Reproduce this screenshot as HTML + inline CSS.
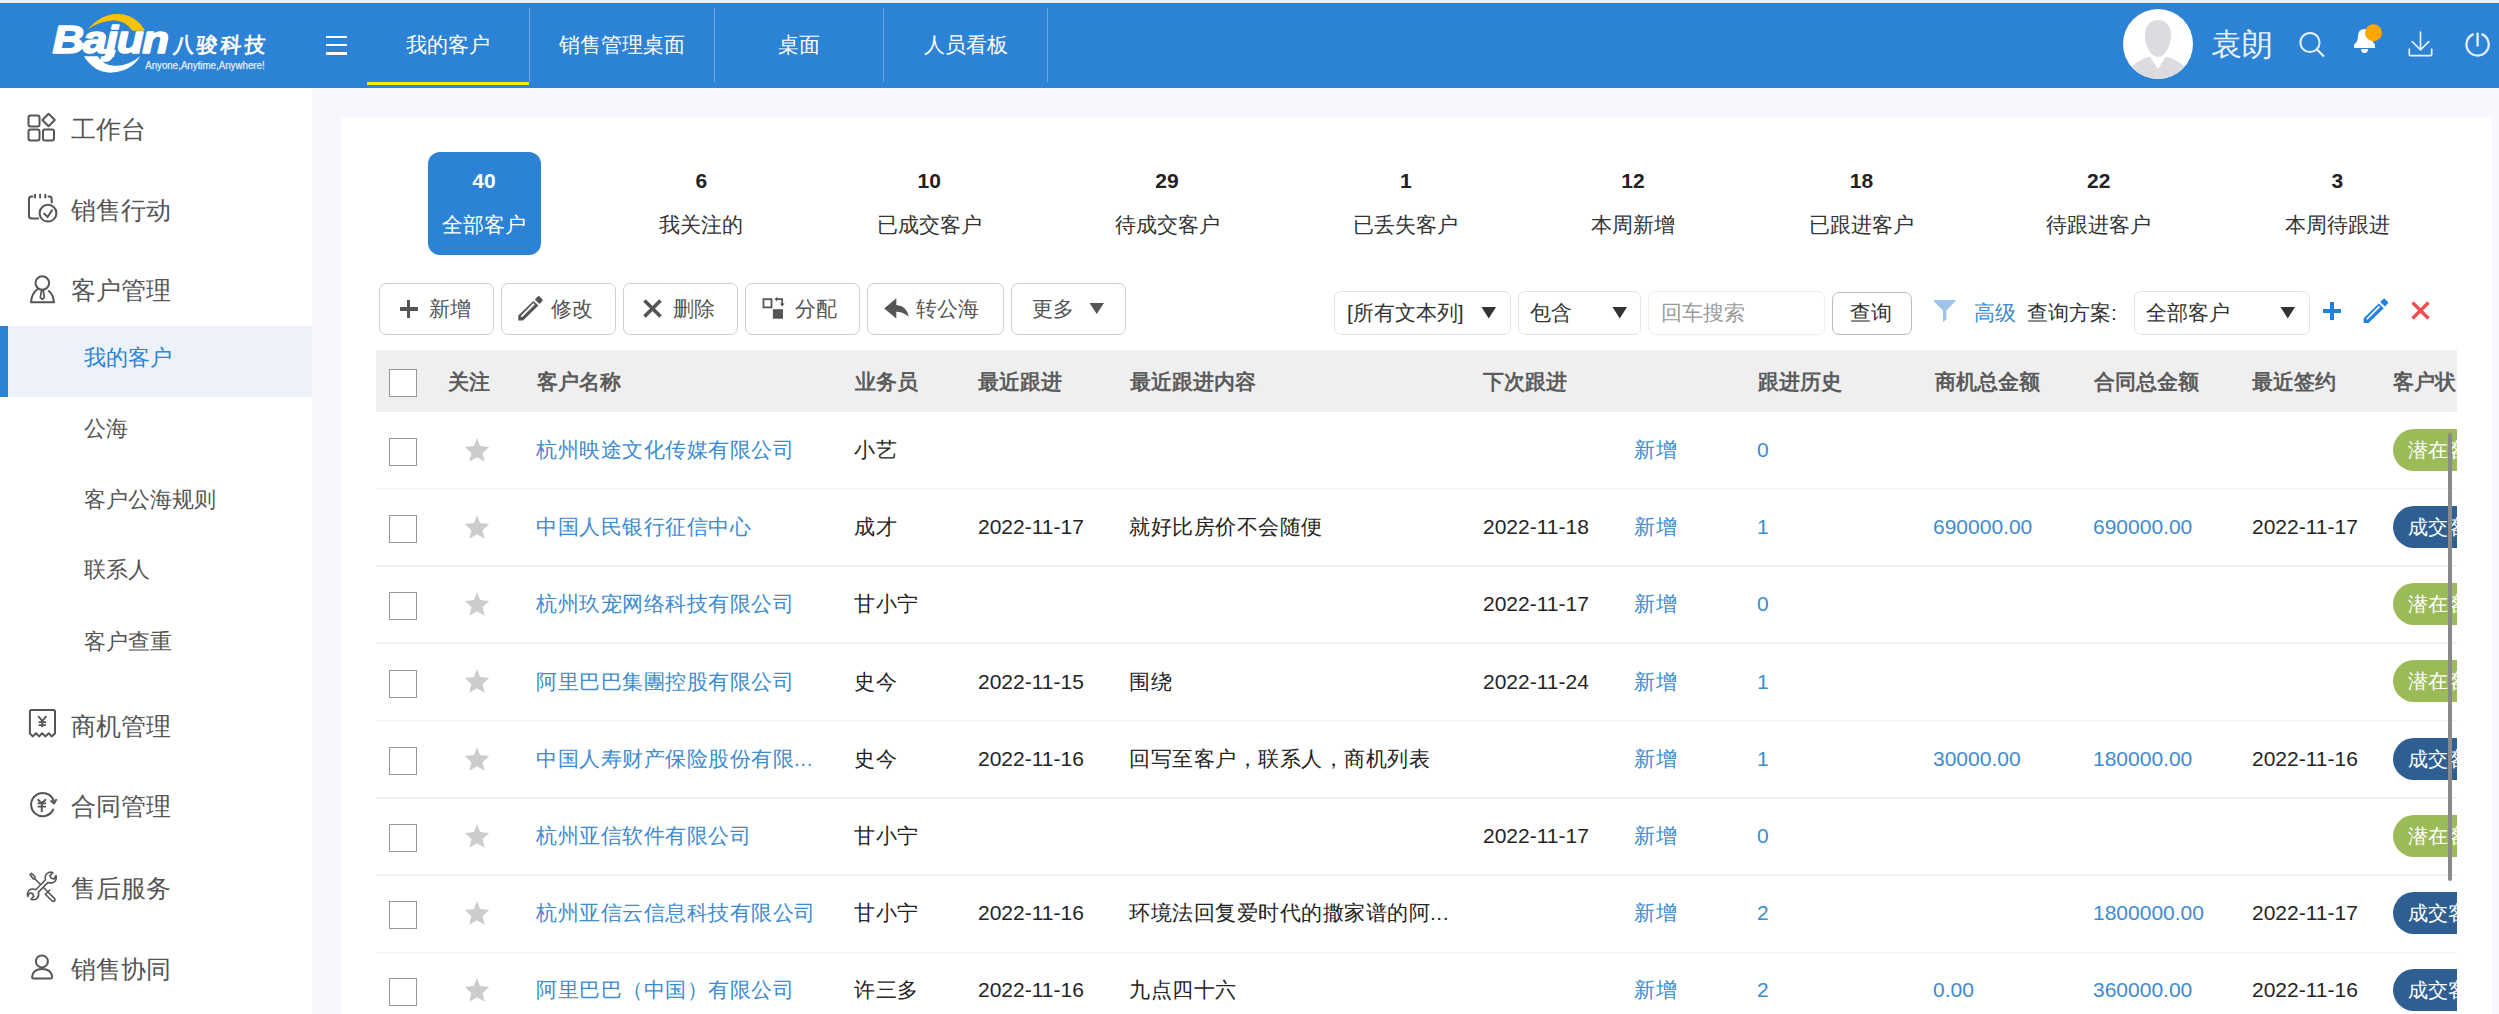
<!DOCTYPE html>
<html><head><meta charset="utf-8">
<style>
*{box-sizing:border-box}
html,body{margin:0;padding:0}
body{width:2499px;height:1014px;overflow:hidden;position:relative;background:#F7F8FD;font-family:"Liberation Sans",sans-serif;color:#333}
.a{position:absolute;white-space:nowrap}
.c{text-align:center}
svg{position:absolute;overflow:visible}
#top{left:0;top:0;width:2499px;height:3px;background:#F1EFEE}
#hdr{left:0;top:3px;width:2499px;height:85px;background:#2C82D4}
.nav{top:30px;height:30px;line-height:30px;font-size:21px;color:#fff;text-align:center}
.sep{top:8px;width:1px;height:74px;background:#6FA6DC}
#side{left:0;top:88px;width:312px;height:926px;background:#fff}
.m1{left:71px;font-size:25px;color:#555;line-height:40px;height:40px}
.m2{left:84px;font-size:22px;color:#555;line-height:40px;height:40px}
#card{left:341px;top:117px;width:2151px;height:897px;background:#fff}
.sn{font-weight:bold;font-size:21px;color:#222;line-height:30px;height:30px;width:200px;text-align:center}
.sl{font-size:21px;color:#333;line-height:30px;height:30px;width:200px;text-align:center}
.btn{top:283px;height:52px;border:1.5px solid #CFCFCF;border-radius:7px;background:#fff}
.bt{top:294px;font-size:21px;color:#555;line-height:30px}
.sel{top:291px;height:44px;border:1.5px solid #E4E4E4;border-radius:7px;background:#fff}
.st{top:298px;font-size:21px;color:#333;line-height:30px}
.th{top:367px;font-weight:bold;font-size:21px;color:#5C5C5C;line-height:30px}
.td{font-size:21px;color:#242424;line-height:30px}
.lk{color:#3D8BD0}
.cj{letter-spacing:.5px}
.cb{left:389px;width:28px;height:28px;border:1.3px solid #979797;background:#fff}
.rl{left:376px;width:2081px;height:1.5px;background:#EDF1F6}
.badge{left:2393px;width:64px;height:42px;border-radius:21px 0 0 21px;color:#fff;font-size:20px;line-height:42px;padding-left:14.5px;overflow:hidden}
</style></head><body>
<div id="top" class="a"></div>
<div id="hdr" class="a"></div>
<svg style="left:0;top:0" width="300" height="88" viewBox="0 0 300 88">
<path d="M87.8 29.3 Q102 13 119 14 Q137 15.5 144.9 30.7 L132.5 30.7 Q124 19.5 111.9 20.4 Q99 21.5 87.8 29.3Z" fill="#F9C300"/>
<path d="M83.9 56.3 Q95 73.5 112 72.6 Q131 71.5 140.3 56.3 Q128 66.5 114 65.8 Q103 65.5 97.7 56.3Z" fill="#fff"/>
<path d="M103.4 60.8 L114 56.8 L116 50 L108 50Z" fill="#fff"/>
<g transform="translate(52.5 53.1) scale(1.11 1)">
<text x="0" y="0" font-family="Liberation Sans" font-weight="bold" font-style="italic" font-size="39.5" fill="#fff" stroke="#fff" stroke-width="1.6" stroke-linejoin="round" letter-spacing="-1.2">Bajun</text>
</g>
<g transform="translate(172.5 51.5) skewX(-5)">
<text x="0" y="0" font-family="Liberation Sans" font-weight="bold" font-size="21" fill="#fff" letter-spacing="3">八骏科技</text>
</g>
<text x="145.2" y="69.4" font-family="Liberation Sans" font-size="10.6" fill="#E6EEF8" stroke="#E6EEF8" stroke-width="0.25" textLength="119.5" lengthAdjust="spacingAndGlyphs">Anyone,Anytime,Anywhere!</text>
</svg>
<div class="a" style="left:326px;top:35.6px;width:21px;height:2.6px;background:#fff"></div>
<div class="a" style="left:326px;top:43.8px;width:21px;height:2.6px;background:#fff"></div>
<div class="a" style="left:326px;top:52px;width:21px;height:2.6px;background:#fff"></div>
<div class="a nav" style="left:367px;width:162px">我的客户</div>
<div class="a nav" style="left:530px;width:184px">销售管理桌面</div>
<div class="a nav" style="left:715px;width:168px">桌面</div>
<div class="a nav" style="left:884px;width:163px">人员看板</div>
<div class="a sep" style="left:529px"></div>
<div class="a sep" style="left:714px"></div>
<div class="a sep" style="left:883px"></div>
<div class="a sep" style="left:1047px"></div>
<div class="a" style="left:367px;top:82px;width:162px;height:3px;background:#F5EE00"></div>
<svg style="left:2123px;top:9px" width="70" height="70" viewBox="0 0 70 70">
<defs><clipPath id="av"><circle cx="35" cy="35" r="35"/></clipPath><filter id="bl"><feGaussianBlur stdDeviation="0.5"/></filter></defs>
<circle cx="35" cy="35" r="35" fill="#fff"/>
<g clip-path="url(#av)" filter="url(#bl)">
<path d="M35 11 C43 11 48 17 48 26 C48 37 42 48 35 48 C28 48 22 37 22 26 C22 17 27 11 35 11Z" fill="#DCDCE0"/>
<path d="M1 72 Q5 54 27 47.5 L35 60 L43 47.5 Q65 54 69 72 L69 80 L1 80Z" fill="#DCDCE0"/>
</g></svg>
<div class="a" style="left:2211px;top:27px;font-size:31px;line-height:36px;color:#E8F0FA">袁朗</div>
<svg style="left:2296px;top:29px" width="32" height="32" viewBox="0 0 32 32">
<circle cx="14" cy="13.5" r="9.6" fill="none" stroke="#E8F0FA" stroke-width="2"/>
<path d="M21 20.5 L28 27.5" stroke="#E8F0FA" stroke-width="2.2"/>
</svg>
<svg style="left:2350px;top:22px" width="36" height="36" viewBox="0 0 36 36">
<path d="M4 26 L4 22.5 Q8 20 8 14 Q8 7 15 7 Q21 7 22 14 Q22 20 25 22.5 L25 26Z" fill="#fff"/>
<path d="M11 27 L18 27 Q18 31 14.5 31 Q11 31 11 27Z" fill="#fff"/>
<circle cx="23.5" cy="10.8" r="8.5" fill="#FFA500"/>
</svg>
<svg style="left:2405px;top:29px" width="32" height="32" viewBox="0 0 32 32">
<path d="M15.5 3.2 L15.5 20.5 M7.2 12.6 L15.5 20.8 L23.8 12.6" fill="none" stroke="#E8F0FA" stroke-width="1.7" stroke-linecap="round"/>
<path d="M4.3 20.2 L4.3 25.4 Q4.3 26.6 5.5 26.6 L25.5 26.6 Q26.7 26.6 26.7 25.4 L26.7 20.2" fill="none" stroke="#E8F0FA" stroke-width="1.7" stroke-linecap="round"/>
</svg>
<svg style="left:0;top:0" width="2499" height="88" viewBox="0 0 2499 88">
<path d="M2472.9 34.4 A11.1 11.1 0 1 0 2482.3 34.4" fill="none" stroke="#E8F0FA" stroke-width="2.3" stroke-linecap="round"/>
<path d="M2477.6 33.6 L2477.6 45.6" stroke="#E8F0FA" stroke-width="2.4" stroke-linecap="round"/>
</svg>
<div id="side" class="a"></div>
<div class="a" style="left:0;top:326px;width:312px;height:71px;background:#EDF2FA"></div>
<div class="a" style="left:0;top:326px;width:8px;height:71px;background:#2C82D4"></div>
<div class="a m1" style="top:108.8px">工作台</div>
<div class="a m1" style="top:189.5px">销售行动</div>
<div class="a m1" style="top:270.4px">客户管理</div>
<div class="a m1" style="top:705.5px">商机管理</div>
<div class="a m1" style="top:786.1px">合同管理</div>
<div class="a m1" style="top:867.9px">售后服务</div>
<div class="a m1" style="top:948.7px">销售协同</div>
<div class="a m2" style="top:338.1px;color:#2C82D4">我的客户</div>
<div class="a m2" style="top:408.7px;">公海</div>
<div class="a m2" style="top:479.5px;">客户公海规则</div>
<div class="a m2" style="top:550.1px;">联系人</div>
<div class="a m2" style="top:621.5px;">客户查重</div>
<svg style="left:0;top:0" width="70" height="1014" viewBox="0 0 70 1014">
<g fill="none" stroke="#555" stroke-width="2" stroke-linecap="round" stroke-linejoin="round">
<rect x="28.5" y="115.5" width="11" height="11" rx="2"/>
<rect x="28.5" y="129.5" width="11" height="11" rx="2"/>
<rect x="43" y="129.5" width="11" height="11" rx="2"/>
<path d="M48.6 113.8 L54.8 120 L48.6 126.2 L42.4 120Z"/>
<path d="M32.5 196.4 L31.5 196.4 Q29 196.4 29 199 L29 216 Q29 218.4 31.5 218.4 L38.2 218.4"/>
<path d="M35 194.8 L35 197.5 M40.1 194.8 L40.1 197.5 M45.3 194.8 L45.3 197.5"/>
<path d="M48.5 196.4 L49.5 196.4 Q51.7 196.4 51.7 199 L51.7 202.4"/>
<circle cx="48" cy="213.2" r="8.4"/>
<path d="M44.2 213.6 L47.6 217 L52 210.2"/>
<circle cx="42.3" cy="283" r="6.8"/>
<path d="M37.7 289 Q31.5 293.5 31 302.2 L54 302.2 Q53 294 48.8 291"/>
<path d="M41.5 290.5 L43.2 290.5 L44.4 297.3 L42.3 299.4 L40.3 297.3Z" stroke-width="1.7"/>
<path d="M31.5 709.9 L53.4 709.9 Q55 709.9 55 711.5 L55 733.6 L51.6 736.4 L48.7 733.2 L45.5 736.4 L42.1 733.2 L39.2 736.4 L36 733.2 L32.9 736.4 L29.9 733.6 L29.9 711.5 Q29.9 709.9 31.5 709.9Z"/>
<path d="M38.2 716.2 L42.3 721 L46.4 716.2 M42.3 721 L42.3 727.3 M38.6 722.1 L46 722.1 M38.6 725.1 L46 725.1" stroke-width="1.9" stroke-linecap="butt"/>
<path d="M53.2 809.5 A11.6 11.6 0 1 1 53.6 800.6"/>
<path d="M51.2 801 L54 803.4 L56.2 799.8" stroke-width="2.1"/>
<path d="M37.6 799.3 L41.8 803.2 L46 799.3 M41.8 803.2 L41.8 812 M37.6 803.4 L46 803.4 M37.6 806.6 L46 806.6" stroke-width="1.9" stroke-linecap="butt"/>
<circle cx="41.9" cy="961.4" r="6"/>
<path d="M42 968.9 Q33 968.9 32 977 Q32 978.4 34 978.4 L50.5 978.4 Q52.6 978.4 52.2 976.5 Q51 968.9 42 968.9Z"/>
</g>
<g fill="none" stroke="#555" stroke-width="1.6" stroke-linejoin="round">
<path d="M30 874.6 L31.5 873.3 L35 876.8 L34.8 878.8 L33.3 879 Z"/>
<path d="M34.5 878.5 L40.5 884.5 M43.8 887.8 L47.5 891.5"/>
<path d="M45.6 894.2 L50 889.8 M47.5 891.5 L54.6 898.6 Q55.6 900.2 54.2 901 Q53 901.8 51.9 900.8 L44.8 893.7"/>
<path d="M35.8 889.7 L45.5 879.8 Q44.4 876 47 873.5 Q49.8 871.2 52.8 872.6 L50 875.6 L51.3 878.3 L54 879 L56 875.5 Q57 879.5 54.4 881.8 Q51.8 883.6 48.1 882.4 L38.4 892.1 Q39.4 896 37 898.3 Q34 900.5 31 899.3 L33.7 896.4 L32.6 893.6 L29.6 893 L27.8 896.4 Q26.6 892.5 29.3 890.1 Q32 888.2 35.8 889.7Z"/>
</g>
</svg>
<div id="card" class="a"></div>
<div class="a" style="left:428px;top:152px;width:113px;height:103px;border-radius:12px;background:#2C82D4"></div>
<div class="a sn" style="left:384.0px;top:166px;color:#fff">40</div>
<div class="a sl" style="left:384.0px;top:210px;color:#fff">全部客户</div>
<div class="a sn" style="left:601.3px;top:166px">6</div>
<div class="a sl" style="left:601.3px;top:210px">我关注的</div>
<div class="a sn" style="left:829.2px;top:166px">10</div>
<div class="a sl" style="left:829.2px;top:210px">已成交客户</div>
<div class="a sn" style="left:1067.0px;top:166px">29</div>
<div class="a sl" style="left:1067.0px;top:210px">待成交客户</div>
<div class="a sn" style="left:1305.8px;top:166px">1</div>
<div class="a sl" style="left:1305.8px;top:210px">已丢失客户</div>
<div class="a sn" style="left:1533.0px;top:166px">12</div>
<div class="a sl" style="left:1533.0px;top:210px">本周新增</div>
<div class="a sn" style="left:1761.4px;top:166px">18</div>
<div class="a sl" style="left:1761.4px;top:210px">已跟进客户</div>
<div class="a sn" style="left:1998.8px;top:166px">22</div>
<div class="a sl" style="left:1998.8px;top:210px">待跟进客户</div>
<div class="a sn" style="left:2237.3px;top:166px">3</div>
<div class="a sl" style="left:2237.3px;top:210px">本周待跟进</div>
<div class="a btn" style="left:379px;width:115px"></div>
<div class="a btn" style="left:501px;width:115px"></div>
<div class="a btn" style="left:623px;width:115px"></div>
<div class="a btn" style="left:745px;width:115px"></div>
<div class="a btn" style="left:867px;width:137px"></div>
<div class="a btn" style="left:1011px;width:115px"></div>
<div class="a" style="left:399.5px;top:307px;width:18px;height:3.6px;background:#555"></div>
<div class="a" style="left:406.7px;top:300px;width:3.6px;height:18px;background:#555"></div>
<div class="a bt" style="left:429px">新增</div>
<svg style="left:0;top:0" width="560" height="340" viewBox="0 0 560 340"><g fill="#555"><path d="M518.3 315.6 L533.4 301 L538.4 305.6 L523.1 320.5 L518.3 320.5Z M520.6 316.3 L522 317.2 L534.8 304.4 L533.4 303.1Z" fill-rule="evenodd"/><path d="M534.8 299.4 L538 296.3 Q538.8 295.7 539.6 296.4 L542.5 299.5 Q543.1 300.3 542.4 301 L539.6 304Z"/></g></svg>
<div class="a bt" style="left:551px">修改</div>
<svg style="left:642px;top:299px" width="22" height="20" viewBox="0 0 22 20">
<path d="M2.5 1.5 L18.5 17.5 M18.5 1.5 L2.5 17.5" stroke="#555" stroke-width="3.6"/>
</svg>
<div class="a bt" style="left:673px">删除</div>
<svg style="left:0;top:0" width="800" height="340" viewBox="0 0 800 340">
<rect x="763.5" y="299.2" width="8" height="8.2" fill="none" stroke="#555" stroke-width="1.8"/>
<rect x="772.9" y="309.2" width="10.1" height="9.5" fill="#555"/>
<path d="M776.5 299.2 L782.2 299.2 L782.2 304" fill="none" stroke="#555" stroke-width="1.7"/>
<path d="M774.6 299.2 L777.2 296.8 L777.2 301.6Z M782.2 306.4 L779.8 303.6 L784.6 303.6Z" fill="#555"/>
</svg>
<div class="a bt" style="left:795px">分配</div>
<svg style="left:0;top:0" width="920" height="340" viewBox="0 0 920 340">
<path d="M884.2 308.5 L896.3 298.3 L896.3 305.1 Q906.8 305.6 908.6 316.8 Q903 311.8 896.3 311.8 L896.3 318.6Z" fill="#555"/></svg>
<div class="a bt" style="left:916px">转公海</div>
<div class="a bt" style="left:1032px">更多</div>
<svg style="left:1089px;top:302px" width="16" height="13" viewBox="0 0 16 13">
<path d="M0.5 1 L15 1 L7.75 12Z" fill="#555"/></svg>
<div class="a sel" style="left:1334px;width:177px"></div>
<div class="a st" style="left:1347px">[所有文本列]</div>
<div class="a sel" style="left:1518px;width:123px"></div>
<div class="a st" style="left:1530px">包含</div>
<div class="a sel" style="left:1648px;width:177px;border-color:#E8EEF5"></div>
<div class="a st" style="left:1661px;color:#9A9A9A">回车搜索</div>
<div class="a sel" style="left:1832px;width:80px;border-color:#BDBDBD;top:292px;height:43px"></div>
<div class="a st" style="left:1850px">查询</div>
<svg style="left:1481px;top:306px" width="16" height="13" viewBox="0 0 16 13">
<path d="M0.5 1 L15 1 L7.75 12.5Z" fill="#333"/></svg>
<svg style="left:1612px;top:306px" width="16" height="13" viewBox="0 0 16 13">
<path d="M0.5 1 L15 1 L7.75 12.5Z" fill="#333"/></svg>
<svg style="left:0;top:0" width="1960" height="330" viewBox="0 0 1960 330">
<path d="M1934 300.1 L1955.1 300.1 Q1955.6 301 1955 301.8 L1946.3 310.5 L1946.3 319.4 L1943 322.1 L1943 310.5 L1934.2 301.8 Q1933.6 301 1934 300.1Z" fill="#A0C4E8"/></svg>
<div class="a st" style="left:1974px;color:#3D8BD0">高级</div>
<div class="a st" style="left:2027px">查询方案:</div>
<div class="a sel" style="left:2134px;width:176px"></div>
<div class="a st" style="left:2146px">全部客户</div>
<svg style="left:2280px;top:306px" width="16" height="13" viewBox="0 0 16 13">
<path d="M0.5 1 L15 1 L7.75 12.5Z" fill="#333"/></svg>
<div class="a" style="left:2323px;top:309px;width:18px;height:3.6px;background:#1F80E0"></div>
<div class="a" style="left:2330.2px;top:302px;width:3.6px;height:18px;background:#1F80E0"></div>
<svg style="left:0;top:0" width="2400" height="340" viewBox="0 0 2400 340"><g fill="#1F80E0" transform="translate(1845.4 2.6)"><path d="M518.3 315.6 L533.4 301 L538.4 305.6 L523.1 320.5 L518.3 320.5Z M520.6 316.3 L522 317.2 L534.8 304.4 L533.4 303.1Z" fill-rule="evenodd"/><path d="M534.8 299.4 L538 296.3 Q538.8 295.7 539.6 296.4 L542.5 299.5 Q543.1 300.3 542.4 301 L539.6 304Z"/></g></svg>
<svg style="left:2410px;top:301px" width="22" height="20" viewBox="0 0 22 20">
<path d="M2.5 1.5 L18.5 17.5 M18.5 1.5 L2.5 17.5" stroke="#F05050" stroke-width="3.4"/>
</svg>
<div class="a" style="left:376px;top:350px;width:2081px;height:61.5px;background:#EFEFEF"></div>
<div class="a cb" style="top:369px"></div>
<div class="a th" style="left:448px">关注</div>
<div class="a th" style="left:537px">客户名称</div>
<div class="a th" style="left:855px">业务员</div>
<div class="a th" style="left:978px">最近跟进</div>
<div class="a th" style="left:1130px">最近跟进内容</div>
<div class="a th" style="left:1483px">下次跟进</div>
<div class="a th" style="left:1758px">跟进历史</div>
<div class="a th" style="left:1935px">商机总金额</div>
<div class="a th" style="left:2094px">合同总金额</div>
<div class="a th" style="left:2252px">最近签约</div>
<div class="a" style="left:2393px;top:350px;width:63px;height:61px;overflow:hidden"><div class="a th" style="left:0;top:17px">客户状态</div></div>
<div class="a cb" style="top:438.0px"></div>
<svg style="left:456.6px;top:430.00px" width="40" height="40" viewBox="-20 -20 40 40">
<path d="M0 -12 L3.1 -3.9 L12.1 -3.1 L5.6 3.2 L7.7 11.8 L0 7.3 L-7.7 11.8 L-5.6 3.2 L-12.1 -3.1 L-3.1 -3.9Z" fill="#CCCCCC"/></svg>
<div class="a td lk cj" style="left:536px;top:435.0px">杭州映途文化传媒有限公司</div>
<div class="a td cj" style="left:854px;top:435.0px">小艺</div>
<div class="a td lk cj" style="left:1634px;top:435.0px">新增</div>
<div class="a td lk" style="left:1757px;top:435.0px">0</div>
<div class="a badge" style="top:428.9px;background:#9BBB59">潜在客户</div>
<div class="a rl" style="top:487.75px"></div>
<div class="a cb" style="top:515.1px"></div>
<svg style="left:456.6px;top:507.15px" width="40" height="40" viewBox="-20 -20 40 40">
<path d="M0 -12 L3.1 -3.9 L12.1 -3.1 L5.6 3.2 L7.7 11.8 L0 7.3 L-7.7 11.8 L-5.6 3.2 L-12.1 -3.1 L-3.1 -3.9Z" fill="#CCCCCC"/></svg>
<div class="a td lk cj" style="left:536px;top:512.1px">中国人民银行征信中心</div>
<div class="a td cj" style="left:854px;top:512.1px">成才</div>
<div class="a td" style="left:978px;top:512.1px">2022-11-17</div>
<div class="a td cj" style="left:1129px;top:512.1px">就好比房价不会随便</div>
<div class="a td" style="left:1483px;top:512.1px">2022-11-18</div>
<div class="a td lk cj" style="left:1634px;top:512.1px">新增</div>
<div class="a td lk" style="left:1757px;top:512.1px">1</div>
<div class="a td lk" style="left:1933px;top:512.1px">690000.00</div>
<div class="a td lk" style="left:2093px;top:512.1px">690000.00</div>
<div class="a td" style="left:2252px;top:512.1px">2022-11-17</div>
<div class="a badge" style="top:506.0px;background:#2F5E93">成交客户</div>
<div class="a rl" style="top:565.08px"></div>
<div class="a cb" style="top:592.3px"></div>
<svg style="left:456.6px;top:584.30px" width="40" height="40" viewBox="-20 -20 40 40">
<path d="M0 -12 L3.1 -3.9 L12.1 -3.1 L5.6 3.2 L7.7 11.8 L0 7.3 L-7.7 11.8 L-5.6 3.2 L-12.1 -3.1 L-3.1 -3.9Z" fill="#CCCCCC"/></svg>
<div class="a td lk cj" style="left:536px;top:589.3px">杭州玖宠网络科技有限公司</div>
<div class="a td cj" style="left:854px;top:589.3px">甘小宁</div>
<div class="a td" style="left:1483px;top:589.3px">2022-11-17</div>
<div class="a td lk cj" style="left:1634px;top:589.3px">新增</div>
<div class="a td lk" style="left:1757px;top:589.3px">0</div>
<div class="a badge" style="top:583.2px;background:#9BBB59">潜在客户</div>
<div class="a rl" style="top:642.41px"></div>
<div class="a cb" style="top:669.5px"></div>
<svg style="left:456.6px;top:661.45px" width="40" height="40" viewBox="-20 -20 40 40">
<path d="M0 -12 L3.1 -3.9 L12.1 -3.1 L5.6 3.2 L7.7 11.8 L0 7.3 L-7.7 11.8 L-5.6 3.2 L-12.1 -3.1 L-3.1 -3.9Z" fill="#CCCCCC"/></svg>
<div class="a td lk cj" style="left:536px;top:666.5px">阿里巴巴集團控股有限公司</div>
<div class="a td cj" style="left:854px;top:666.5px">史今</div>
<div class="a td" style="left:978px;top:666.5px">2022-11-15</div>
<div class="a td cj" style="left:1129px;top:666.5px">围绕</div>
<div class="a td" style="left:1483px;top:666.5px">2022-11-24</div>
<div class="a td lk cj" style="left:1634px;top:666.5px">新增</div>
<div class="a td lk" style="left:1757px;top:666.5px">1</div>
<div class="a badge" style="top:660.4px;background:#9BBB59">潜在客户</div>
<div class="a rl" style="top:719.74px"></div>
<div class="a cb" style="top:746.6px"></div>
<svg style="left:456.6px;top:738.60px" width="40" height="40" viewBox="-20 -20 40 40">
<path d="M0 -12 L3.1 -3.9 L12.1 -3.1 L5.6 3.2 L7.7 11.8 L0 7.3 L-7.7 11.8 L-5.6 3.2 L-12.1 -3.1 L-3.1 -3.9Z" fill="#CCCCCC"/></svg>
<div class="a td lk cj" style="left:536px;top:743.6px">中国人寿财产保险股份有限...</div>
<div class="a td cj" style="left:854px;top:743.6px">史今</div>
<div class="a td" style="left:978px;top:743.6px">2022-11-16</div>
<div class="a td cj" style="left:1129px;top:743.6px">回写至客户，联系人，商机列表</div>
<div class="a td lk cj" style="left:1634px;top:743.6px">新增</div>
<div class="a td lk" style="left:1757px;top:743.6px">1</div>
<div class="a td lk" style="left:1933px;top:743.6px">30000.00</div>
<div class="a td lk" style="left:2093px;top:743.6px">180000.00</div>
<div class="a td" style="left:2252px;top:743.6px">2022-11-16</div>
<div class="a badge" style="top:737.5px;background:#2F5E93">成交客户</div>
<div class="a rl" style="top:797.07px"></div>
<div class="a cb" style="top:823.8px"></div>
<svg style="left:456.6px;top:815.75px" width="40" height="40" viewBox="-20 -20 40 40">
<path d="M0 -12 L3.1 -3.9 L12.1 -3.1 L5.6 3.2 L7.7 11.8 L0 7.3 L-7.7 11.8 L-5.6 3.2 L-12.1 -3.1 L-3.1 -3.9Z" fill="#CCCCCC"/></svg>
<div class="a td lk cj" style="left:536px;top:820.8px">杭州亚信软件有限公司</div>
<div class="a td cj" style="left:854px;top:820.8px">甘小宁</div>
<div class="a td" style="left:1483px;top:820.8px">2022-11-17</div>
<div class="a td lk cj" style="left:1634px;top:820.8px">新增</div>
<div class="a td lk" style="left:1757px;top:820.8px">0</div>
<div class="a badge" style="top:814.6px;background:#9BBB59">潜在客户</div>
<div class="a rl" style="top:874.40px"></div>
<div class="a cb" style="top:900.9px"></div>
<svg style="left:456.6px;top:892.90px" width="40" height="40" viewBox="-20 -20 40 40">
<path d="M0 -12 L3.1 -3.9 L12.1 -3.1 L5.6 3.2 L7.7 11.8 L0 7.3 L-7.7 11.8 L-5.6 3.2 L-12.1 -3.1 L-3.1 -3.9Z" fill="#CCCCCC"/></svg>
<div class="a td lk cj" style="left:536px;top:897.9px">杭州亚信云信息科技有限公司</div>
<div class="a td cj" style="left:854px;top:897.9px">甘小宁</div>
<div class="a td" style="left:978px;top:897.9px">2022-11-16</div>
<div class="a td cj" style="left:1129px;top:897.9px">环境法回复爱时代的撒家谱的阿...</div>
<div class="a td lk cj" style="left:1634px;top:897.9px">新增</div>
<div class="a td lk" style="left:1757px;top:897.9px">2</div>
<div class="a td lk" style="left:2093px;top:897.9px">1800000.00</div>
<div class="a td" style="left:2252px;top:897.9px">2022-11-17</div>
<div class="a badge" style="top:891.8px;background:#2F5E93">成交客户</div>
<div class="a rl" style="top:951.73px"></div>
<div class="a cb" style="top:978.1px"></div>
<svg style="left:456.6px;top:970.05px" width="40" height="40" viewBox="-20 -20 40 40">
<path d="M0 -12 L3.1 -3.9 L12.1 -3.1 L5.6 3.2 L7.7 11.8 L0 7.3 L-7.7 11.8 L-5.6 3.2 L-12.1 -3.1 L-3.1 -3.9Z" fill="#CCCCCC"/></svg>
<div class="a td lk cj" style="left:536px;top:975.1px">阿里巴巴（中国）有限公司</div>
<div class="a td cj" style="left:854px;top:975.1px">许三多</div>
<div class="a td" style="left:978px;top:975.1px">2022-11-16</div>
<div class="a td cj" style="left:1129px;top:975.1px">九点四十六</div>
<div class="a td lk cj" style="left:1634px;top:975.1px">新增</div>
<div class="a td lk" style="left:1757px;top:975.1px">2</div>
<div class="a td lk" style="left:1933px;top:975.1px">0.00</div>
<div class="a td lk" style="left:2093px;top:975.1px">360000.00</div>
<div class="a td" style="left:2252px;top:975.1px">2022-11-16</div>
<div class="a badge" style="top:969.0px;background:#2F5E93">成交客户</div>
<div class="a" style="left:2448px;top:433px;width:4px;height:448px;border-radius:2px;background:#8A8A8A"></div>
</body></html>
